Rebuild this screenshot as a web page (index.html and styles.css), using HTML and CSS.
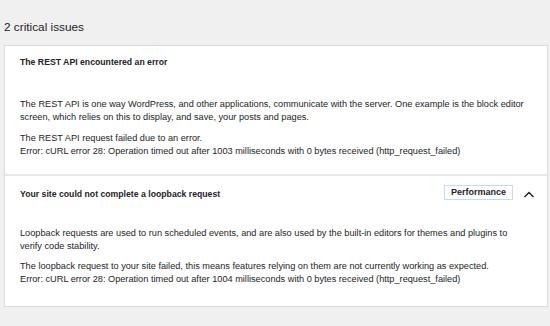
FILE: index.html
```html
<!DOCTYPE html>
<html lang="en">
<head>
<meta charset="utf-8">
<title>Site Health</title>
<link rel="stylesheet" href="styles.css">
</head>
<body>
<h2 class="title">2 critical issues</h2>
<div class="accordion">
  <section class="item item-rest">
    <div class="item-head">
      <span class="item-title">The REST API encountered an error</span>
    </div>
    <div class="item-body">
      <p>The REST API is one way WordPress, and other applications, communicate with the server. One example is the block editor screen, which relies on this to display, and save, your posts and pages.</p>
      <p>The REST API request failed due to an error.<br>Error: cURL error 28: Operation timed out after 1003 milliseconds with 0 bytes received (http_request_failed)</p>
    </div>
  </section>
  <section class="item item-loop">
    <div class="item-head">
      <span class="item-title">Your site could not complete a loopback request</span>
      <span class="badge">Performance</span>
      <svg class="chevron" width="12" height="7" viewBox="0 0 12 7" aria-hidden="true"><polyline points="1.5,6 6,1.5 10.5,6" fill="none" stroke="#1d2327" stroke-width="1.5"/></svg>
    </div>
    <div class="item-body">
      <p>Loopback requests are used to run scheduled events, and are also used by the built-in editors for themes and plugins to verify code stability.</p>
      <p>The loopback request to your site failed, this means features relying on them are not currently working as expected.<br>Error: cURL error 28: Operation timed out after 1004 milliseconds with 0 bytes received (http_request_failed)</p>
    </div>
  </section>
</div>
</body>
</html>
```
FILE: styles.css
```css
html, body {
  margin: 0;
  padding: 0;
  background: #f0f0f1;
}
body {
  padding: 19px 2px 0 4px;
  font-family: "Liberation Sans", Arial, sans-serif;
  color: #1d2327;
}
.title {
  margin: 0 0 10px 0;
  font-size: 11.8px;
  line-height: 16px;
  font-weight: 400;
}
.accordion {
  background: #fff;
  border: 1px solid #dcdcde;
}
.item + .item {
  border-top: 2px solid #e8e8e9;
}
.item-head {
  display: flex;
  align-items: center;
  min-height: 32px;
  padding: 0 12px 0 15px;
}
.item-loop .item-head {
  min-height: 36px;
}
.item-title {
  flex: 1;
  font-size: 8.7px;
  font-weight: 700;
}
.badge {
  font-size: 9px;
  font-weight: 700;
  line-height: 13px;
  padding: 0 6px;
  border: 1px solid #c5dcef;
  margin: 0 10px 4px 0;
}
.chevron {
  display: block;
}
.item-body {
  padding: 20px 20px 16px 15px;
  font-size: 9.2px;
  line-height: 13px;
}
.item-loop .item-body {
  padding: 15px 20px 20px 15px;
}
.item-body p {
  margin: 0;
}
.item-body p + p {
  margin-top: 8px;
}
.item-loop .item-body p + p {
  margin-top: 7px;
}
```
